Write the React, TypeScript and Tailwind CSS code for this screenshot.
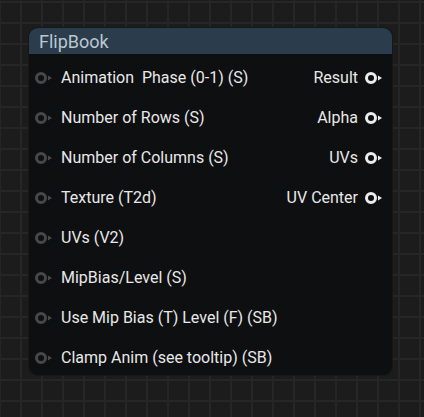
import React from "react";

const inputs = [
  "Animation  Phase (0-1) (S)",
  "Number of Rows (S)",
  "Number of Columns (S)",
  "Texture (T2d)",
  "UVs (V2)",
  "MipBias/Level (S)",
  "Use Mip Bias (T) Level (F) (SB)",
  "Clamp Anim (see tooltip) (SB)",
];
const outputs = ["Result", "Alpha", "UVs", "UV Center"];

function Pin({ out }: { out?: boolean }) {
  const c = out ? "#ececec" : "#4a4a4a";
  return (
    <div className="w-[18px] h-[14px] shrink-0 flex items-center">
      <div
        className={
          out
            ? "w-[12px] h-[12px] rounded-full border-[3px] border-[#ececec] shrink-0"
            : "w-[12px] h-[12px] rounded-full border-[3px] border-[#484848] shrink-0"
        }
      />
      <svg width="5" height="6" viewBox="0 0 5 6" className="shrink-0 ml-[1px]">
        <path d="M0 0.5 L4 3 L0 5.5 Z" fill={c} />
      </svg>
    </div>
  );
}

export default function App() {
  return (
    <div
      className="w-[424px] h-[417px] bg-[#1c1c1c] relative overflow-hidden bg-[linear-gradient(to_right,#262626_2px,transparent_2px),linear-gradient(to_bottom,#262626_2px,transparent_2px)] bg-[size:21px_21px] bg-[position:-1px_1px]"
      style={{ fontFamily: "Roboto, 'Liberation Sans', sans-serif" }}
    >
      <div className="absolute left-[29px] top-[28px] w-[363px] h-[347px] rounded-[9px] bg-[#0e0f10] shadow-[0_0_0_1px_#161718] flex flex-col">
        <div className="h-[26px] shrink-0 rounded-t-[9px] bg-[#2b3d4c] pl-[10px] flex items-center text-[18px] text-[#bcc7d0]">
          FlipBook
        </div>
        <div className="pt-[4px] flex">
          <div className="flex-1 flex flex-col">
            {inputs.map((t) => (
              <div key={t} className="h-10 flex items-center pl-[6px] text-[16px] text-[#e8e8e8] whitespace-pre">
                <Pin />
                <span className="ml-[8px]">{t}</span>
              </div>
            ))}
          </div>
          <div className="flex flex-col pr-[9px]">
            {outputs.map((t) => (
              <div key={t} className="h-10 flex items-center justify-end text-[16px] text-[#e8e8e8]">
                <span className="mr-[7px]">{t}</span>
                <Pin out />
              </div>
            ))}
          </div>
        </div>
      </div>
    </div>
  );
}
